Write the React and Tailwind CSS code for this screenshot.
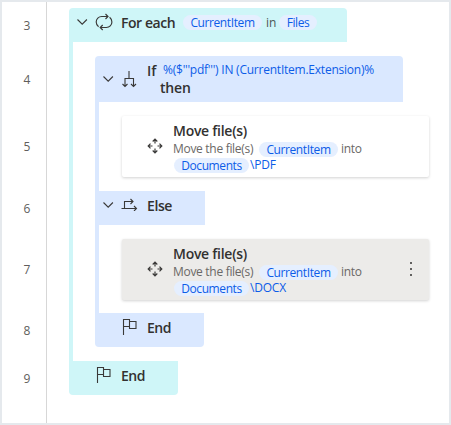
import React from "react";

const strokeProps = { fill: "none", stroke: "#3a3938", strokeWidth: 1.1 };

function Chevron({ className = "" }) {
  return (
    <svg className={`h-3 w-3 shrink-0 ${className}`} viewBox="0 0 12 12" {...strokeProps}>
      <path d="M1.500 3.500L6.200 8.200l4.700-4.700" />
    </svg>
  );
}

function LoopIcon({ className = "" }) {
  return (
    <svg className={`h-[18px] w-[18px] shrink-0 ${className}`} viewBox="0 0 18 18" {...strokeProps} strokeWidth="1.15">
      <path d="M3.600 13.700C2 12.500 1.200 10.800 1.200 9A5.500 5.500 0 0 1 6.700 3.500H13M10.500 1L13 3.500 10.500 6" />
      <path d="M14.600 4.300C16.100 5.500 16.900 7.200 16.900 9a5.500 5.500 0 0 1-5.500 5.500H5.200M7.700 12L5.200 14.500 7.700 17" />
    </svg>
  );
}

function BranchIcon({ className = "" }) {
  return (
    <svg className={`h-[18px] w-4 shrink-0 ${className}`} viewBox="0 0 16 18" {...strokeProps}>
      <path d="M8 1v7.500M4 16.500V8.500h8.500V16.500M1.500 14L4 16.500 6.500 14M10 14l2.500 2.500L15 14" />
    </svg>
  );
}

function ElseIcon({ className = "" }) {
  return (
    <svg className={`h-4 w-[18px] shrink-0 ${className}`} viewBox="0 0 18 16" {...strokeProps}>
      <path d="M0.500 13.500h15M13 11l2.500 2.500L13 16M3.500 13.500v-7h8.500M9.500 4l2.500 2.500L9.500 9" />
    </svg>
  );
}

function MoveIcon({ className = "" }) {
  return (
    <svg className={`h-4 w-4 shrink-0 ${className}`} viewBox="0 0 16 16" {...strokeProps} strokeWidth="1.2">
      <path d="M8 1.200v4.300M5.700 3.500L8 1.200l2.300 2.300M8 14.800v-4.300M5.700 12.500L8 14.800l2.300-2.300M1.200 8h4.300M3.500 5.700L1.200 8l2.300 2.300M14.800 8h-4.300M12.500 5.700L14.800 8l-2.300 2.300" />
    </svg>
  );
}

function FlagIcon({ className = "" }) {
  return (
    <svg className={`h-[18px] w-4 shrink-0 ${className}`} viewBox="0 0 16 18" {...strokeProps}>
      <path d="M1.500 17V1.500h6v7h-6M7.500 3.500h6.500v7H7.500v-2" />
    </svg>
  );
}

function Pill({ children, className }) {
  return (
    <span className={`flex h-[15px] shrink-0 items-center justify-center rounded-full bg-[#e5efff] text-xs leading-[15px] tracking-[-0.4px] text-[#0c5ce8] ${className}`}>
      {children}
    </span>
  );
}

function MoveCard({ file, selected, className = "" }) {
  return (
    <div className={`flex h-[61px] w-[307px] rounded-xs shadow-[0_1px_3px_rgba(0,0,0,0.18)] ${selected ? "bg-[#ecebe9]" : "bg-white"} ${className}`}>
      <MoveIcon className="mt-[22px] ml-[25px]" />
      <div className="ml-[11px] pt-[7px] text-xs text-[#6a6866]">
        <div className="-ml-px h-[18px] text-sm leading-4 font-semibold tracking-[-0.27px] text-[#323130]">Move file(s)</div>
        <div className="flex h-4 items-center leading-4 whitespace-nowrap">
          <span className="-ml-px w-[86px] tracking-[-0.3px]">Move the file(s)</span>
          <Pill className="w-[79px]">CurrentItem</Pill>
          <span className="ml-[3px] tracking-[-0.3px]">into</span>
        </div>
        <div className="flex h-4 items-center leading-4 text-[#0c5ce8]">
          <Pill className="w-[75px]">Documents</Pill>
          <span className="ml-px tracking-[-0.2px]">{file}</span>
        </div>
      </div>
      {selected && (
        <div className="mr-[17px] ml-auto flex flex-col items-center gap-1 self-center pb-px">
          <i className="h-0.5 w-0.5 bg-[#61605f]" />
          <i className="h-0.5 w-0.5 bg-[#61605f]" />
          <i className="h-0.5 w-0.5 bg-[#61605f]" />
        </div>
      )}
    </div>
  );
}

const title = "text-sm leading-4 font-semibold text-[#323130]";

export default function App() {
  return (
    <div className="flex h-[425px] w-[451px] overflow-hidden border-2 border-[#e5e9ed] bg-white font-['Open_Sans','Noto_Sans',sans-serif] whitespace-nowrap">
      <div className="flex w-[45px] shrink-0 flex-col border-r border-[#d7d7d7] pl-[6px] text-center text-xs leading-[14px] text-[#605e5c]">
        <div className="mt-[17px]">3</div>
        <div className="mt-10">4</div>
        <div className="mt-[53px]">5</div>
        <div className="mt-12">6</div>
        <div className="mt-[47px]">7</div>
        <div className="mt-[47px]">8</div>
        <div className="mt-[34px]">9</div>
      </div>
      <div className="mt-1.5 ml-[22px] flex w-[370px] flex-col items-start">
        <div className="flex h-[34px] w-[278px] rounded-t bg-[#cff6f8]">
          <Chevron className="mt-[8px] ml-[7px]" />
          <LoopIcon className="mt-[5px] ml-[7px]" />
          <span className={`${title} mt-[7px] ml-[8px] w-[62px] tracking-[-0.45px]`}>For each</span>
          <Pill className="mt-[7px] w-[79px]">CurrentItem</Pill>
          <span className="mt-[7px] ml-1 w-[13px] text-xs leading-[15px] text-[#4b5555]">in</span>
          <Pill className="mt-[7px] w-[38px]">Files</Pill>
        </div>
        <div className="flex w-full flex-col items-start border-l-4 border-[#cff6f8] py-3.5 pl-[22px]">
          <div className="flex h-[46px] w-[308px] rounded-t bg-[#dae8ff]">
            <Chevron className="mt-[17px] ml-[7px]" />
            <BranchIcon className="mt-[14px] ml-[7px]" />
            <div className="ml-[10px] pt-[6px]">
              <div className="flex h-[18px]">
                <span className={`${title} mt-px w-4`}>If</span>
                <span className="text-xs leading-4 tracking-[-0.23px] text-[#0c5ce8]">%($'''pdf''') IN (CurrentItem.Extension)%</span>
              </div>
              <div className={`${title} pl-[13px] tracking-[-0.2px]`}>then</div>
            </div>
          </div>
          <div className="border-l-4 border-[#dae8ff] pt-3.5 pb-[14px] pl-[23px]">
            <MoveCard file="\PDF" />
          </div>
          <div className="flex h-[34px] w-[110px] bg-[#dae8ff]">
            <Chevron className="mt-[8px] ml-[7px]" />
            <ElseIcon className="mt-1 ml-[7px]" />
            <span className={`${title} mt-[7px] ml-[8px] tracking-[-0.4px]`}>Else</span>
          </div>
          <div className="border-l-4 border-[#dae8ff] pt-3.5 pb-[13px] pl-[23px]">
            <MoveCard file="\DOCX" selected />
          </div>
          <div className="flex h-[34px] w-[109px] rounded-b bg-[#dae8ff]">
            <FlagIcon className="mt-[5px] ml-[27px]" />
            <span className={`${title} mt-[7px] ml-[9px] tracking-[-0.5px]`}>End</span>
          </div>
        </div>
        <div className="flex h-[34px] w-[109px] rounded-b bg-[#cff6f8]">
          <FlagIcon className="mt-[5px] ml-[27px]" />
          <span className={`${title} mt-[7px] ml-[9px] tracking-[-0.5px]`}>End</span>
        </div>
      </div>
    </div>
  );
}
